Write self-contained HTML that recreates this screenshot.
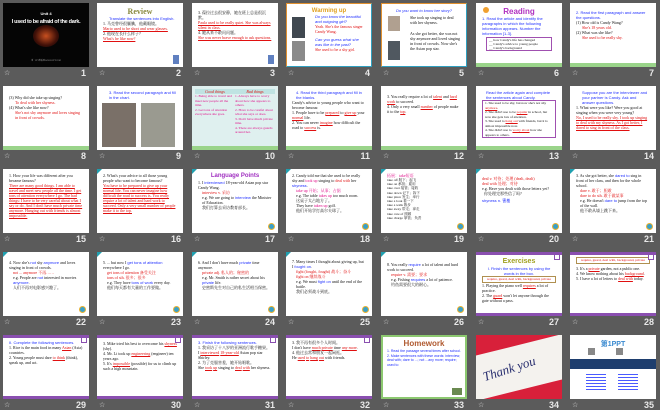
<!DOCTYPE html>
<html><head><meta charset="utf-8"><style>
*{margin:0;padding:0;box-sizing:border-box}
body{width:660px;height:410px;background:#5b5b5b;position:relative;overflow:hidden;font-family:"Liberation Serif","Noto Serif CJK SC",serif}
.s{position:absolute;width:86px;height:64px;background:#fff;overflow:hidden;font-size:4px;line-height:5px;padding:4px 6px;color:#111}
.st{position:absolute;color:#ddd;font-size:7px;font-family:"Liberation Sans","DejaVu Sans",sans-serif}
.n{position:absolute;width:40px;text-align:right;color:#e8e8e8;font-size:9px;font-weight:bold;font-family:"Liberation Sans",sans-serif}
.b{color:#1f2fff;font-family:"Liberation Sans","Noto Sans CJK SC",sans-serif}
.r{color:#e01010;text-decoration:underline}
.p{color:#e0108a}
.g{position:absolute;left:0;right:0;bottom:0;height:4px;background:#9ad48a}
.pu{position:absolute;left:0;right:0;top:0;height:3px;background:#8a4fb0}
.pub{position:absolute;left:0;right:0;bottom:0;height:3px;background:#8a4fb0}
.ic{position:absolute;right:3px;bottom:3px;width:7px;height:7px;border-radius:50%;background:#3aa0c8;border:1px solid #e8b030}
.tri{position:absolute;left:0;top:0;width:0;height:0;border-top:5px solid #20a0b0;border-right:5px solid transparent}
.ttl{font-family:"Liberation Sans",sans-serif;font-weight:bold;text-align:center;font-size:8px;line-height:9px}
.ph{position:absolute;background:#666}
</style></head><body>

<!-- Row 1 -->
<div class="s" style="left:3px;top:3px;background:#050505;color:#fff;padding:0">
 <div style="position:absolute;left:0;right:0;top:8px;text-align:center;font:bold 4px 'Liberation Sans',sans-serif">Unit 4</div>
 <div style="position:absolute;left:0;right:0;top:16px;text-align:center;font:bold 5.5px 'Liberation Sans',sans-serif;letter-spacing:-0.3px;white-space:nowrap">I used to be afraid of the dark.</div>
 <div style="position:absolute;left:30px;top:22px;width:26px;height:22px;border-radius:50%;background:radial-gradient(#c85020,#401008 60%,#050505)"></div>
 <div style="position:absolute;left:0;right:0;top:56px;text-align:center;font-size:2px;color:#aaa">第一PPT模板网-WWW.1PPT.COM</div>
</div>
<div class="s" style="left:97px;top:3px">
 <div class="ttl" style="color:#8a8a40;font-family:'Liberation Serif'">Review</div>
 <div class="b" style="padding-left:6px">Translate the sentences into English.</div>
 <div>1. 马克曾经很腼腆，他戴眼镜。</div><div class="r">Mario used to be short and wear glasses.</div>
 <div>2. 他现在长什么样子?</div><div class="r">What's he like now?</div>
 <div class="ph" style="right:4px;bottom:3px;width:6px;height:9px;background:#6080c0"></div>
</div>
<div class="s" style="left:192px;top:3px">
 <div style="margin-top:3px">3. 葆拉过去很安静，她在班上总是很沉默。</div><div class="r">Paula used to be really quiet. She was always silent in class.</div>
 <div>4. 她从来不敢问问题。</div><div class="r">She was never brave enough to ask questions.</div>
 <div class="ph" style="right:4px;bottom:3px;width:6px;height:9px;background:#6080c0"></div>
</div>
<div class="s" style="left:286px;top:3px;border:1.5px solid #e09030;border-right-color:#30a0c0;border-bottom-color:#30a0c0">
 <div class="ttl" style="color:#e0a020;font-size:6px;line-height:6px">Warming up</div>
 <div class="ph" style="left:5px;top:13px;width:13px;height:21px;background:#404850"></div>
 <div class="ph" style="left:5px;top:37px;width:13px;height:20px;background:#8a8a8a"></div>
 <div style="margin-left:22px;font-style:italic" class="b">Do you know the beautiful and outgoing girl?</div>
 <div style="margin-left:22px;color:#e01010">Yeah. She's the famous singer Candy Wang.</div>
 <div style="margin-left:22px;font-style:italic;margin-top:3px" class="b">Can you guess what she was like in the past?</div>
 <div style="margin-left:22px;color:#e01010">She used to be a shy girl.</div>
</div>
<div class="s" style="left:381px;top:3px;border:1.5px solid #e09030;border-right-color:#30a0c0;border-bottom-color:#30a0c0">
 <div class="b" style="font-style:italic;text-align:center">Do you want to know her story?</div>
 <div class="ph" style="left:6px;top:12px;width:12px;height:15px;background:#b0a090"></div>
 <div class="ph" style="left:6px;top:37px;width:12px;height:19px;background:#505860"></div>
 <div style="margin-left:22px;margin-top:2px">She took up singing to deal with her shyness.</div>
 <div style="margin-left:22px;margin-top:6px">As she got better, she was not shy anymore and loved singing in front of crowds. Now she's the Asian pop star.</div>
</div>
<div class="s" style="left:476px;top:3px">
 <div style="position:absolute;left:7px;top:4px;width:6px;height:6px;border-radius:50%;background:#f0a030"></div>
 <div class="ttl" style="color:#b030c0">Reading</div>
 <div class="b">1. Read the article and identify the paragraphs in which the following information appears. Number the information [1-3].</div>
 <div style="border:1px solid #a050b0;margin:1px 4px;padding:0 2px;font-size:3.5px;line-height:4px">__ how Candy's life has changed<br>__ Candy's advice to young people<br>__ Candy's background</div>
 <div class="g"></div>
</div>
<div class="s" style="left:570px;top:3px">
 <div class="b" style="margin-top:3px">2. Read the first paragraph and answer the questions.</div>
 <div>(1) How old is Candy Wang?</div><div style="color:#e01010;padding-left:6px">She's 18 years old.</div>
 <div>(2) What was she like?</div><div style="color:#e01010;padding-left:6px">She used to be really shy.</div>
 <div class="g"></div>
</div>

<!-- Row 2 -->
<div class="s" style="left:3px;top:86px">
 <div style="margin-top:5px">(3) Why did she take up singing?</div><div style="color:#e01010;padding-left:6px">To deal with her shyness.</div>
 <div>(4) What's she like now?</div><div style="color:#e01010;padding-left:6px">She's not shy anymore and loves singing in front of crowds.</div>
 <div class="g"></div>
</div>
<div class="s" style="left:97px;top:86px">
 <div class="b" style="padding-left:6px">3. Read the second paragraph and fill in the chart.</div>
 <div class="ph" style="left:5px;top:17px;width:34px;height:44px;background:#7a7068"></div>
 <div class="ph" style="left:44px;top:17px;width:34px;height:44px;background:#9a9a90"></div>
</div>
<div class="s" style="left:192px;top:86px;background:#dff0ef;padding:3px">
 <div style="display:flex;background:#bfe3e2;color:#e01010;font-style:italic"><div style="width:50%;text-align:center">Good things</div><div style="width:50%;text-align:center">Bad things</div></div>
 <div style="display:flex;color:#e0108a;font-size:3.5px;line-height:4.5px"><div style="width:50%">1. Being able to travel and meet new people all the time.<br>2. Get tons of attention everywhere she goes.</div><div style="width:50%" class="">1. Always have to worry about how she appears to others.<br>2. Have to be careful about what she says or does.<br>3. Don't have much private time.<br>4. There are always guards around her.</div></div>
 <div class="g"></div>
</div>
<div class="s" style="left:286px;top:86px">
 <div class="b" style="padding-left:4px">4. Read the third paragraph and fill in the blanks.</div>
 <div>Candy's advice to young people who want to become famous:</div>
 <div>1. People have to be <span class="r">prepared</span> to <span class="r">give up</span> your <span class="r">normal</span> life.</div>
 <div>2. You can never <span class="r">imagine</span> how difficult the road to <span class="r">success</span> is.</div>
 <div class="g"></div>
</div>
<div class="s" style="left:381px;top:86px">
 <div style="margin-top:4px">3. You really require a lot of <span class="r">talent</span> and <span class="r">hard work</span> to succeed.</div>
 <div>4. Only a very small <span class="r">number</span> of people make it to the <span class="r">top</span>.</div>
 <div class="g"></div>
</div>
<div class="s" style="left:476px;top:86px">
 <div class="b" style="padding-left:4px">Read the article again and complete the sentences about Candy.</div>
 <div style="border:1px solid #a050b0;padding:0 2px;font-size:3.5px;line-height:4.5px">1. She used to be shy, but now she's not shy <span class="r">anymore</span>.<br>2. She didn't use to be <span class="r">popular</span> in school, but now she gets lots of attention.<br>3. She used to <span class="r">hang out</span> with friends, but it is almost impossible now.<br>4. She didn't use to <span class="r">worry about</span> how she appears to others.</div>
 <div class="g"></div>
</div>
<div class="s" style="left:570px;top:86px">
 <div class="b" style="padding-left:6px">Suppose you are the interviewer and your partner is Candy. Ask and answer questions.</div>
 <div>1. What were you like? Were you good at singing when you were very young?</div>
 <div class="r">No, I used to be really shy. I took up singing to deal with my shyness. As I got better, I dared to sing in front of the class.</div>
</div>

<!-- Row 3 -->
<div class="s" style="left:3px;top:169px">
 <div>1. How your life was different after you became famous?</div>
 <div class="r">There are many good things. I am able to travel and meet new people all the time. I get tons of attention everywhere I go. The bad things: I have to be very careful about what I say or do. And I don't have much private time anymore. Hanging out with friends is almost impossible.</div>
</div>
<div class="s" style="left:97px;top:169px">
 <div class="tri"></div>
 <div>2. What's your advice to all those young people who want to become famous?</div>
 <div class="r">You have to be prepared to give up your normal life. You can never imagine how difficult the road to success is. You really require a lot of talent and hard work to succeed. Only a very small number of people make it to the top.</div>
</div>
<div class="s" style="left:192px;top:169px">
 <div class="tri"></div>
 <div class="ttl" style="color:#a030c0;font-size:6px;line-height:7px">Language Points</div>
 <div>1. I <span class="b">interviewed</span> 18-year-old Asian pop star Candy Wang.</div>
 <div style="color:#e01010;padding-left:4px">interview v. 采访</div>
 <div style="padding-left:4px">e.g. We are going to <span class="b">interview</span> the Minister of Education.<br>我们打算去采访教育部长。</div>
 <div class="ic"></div>
</div>
<div class="s" style="left:286px;top:169px">
 <div class="tri"></div>
 <div>2. Candy told me that she used to be really shy and <span class="p">took up</span> singing to <span style="color:#e01010">deal with</span> her <span class="b">shyness</span>.</div>
 <div class="p" style="padding-left:4px">take up 开始；从事；占据</div>
 <div style="padding-left:4px">e.g. The table <span class="p">takes up</span> too much room.<br>这桌子太占地方了。<br>They have <span class="p">taken up</span> golf.<br>他们开始学打高尔夫球了。</div>
 <div class="ic"></div>
</div>
<div class="s" style="left:381px;top:169px">
 <div class="tri"></div>
 <div class="p">拓展：take短语</div>
 <div style="font-size:3.5px;line-height:4.2px">take off 脱下；起飞<br>take on 承担；雇用<br>take over 接管；接收<br>take down 记下；拆下<br>take place 发生；举行<br>take a look 看一下<br>take a walk 散步<br>take away 带走；拿走<br>take care of 照顾<br>take charge 掌管；负责</div>
 <div class="ic"></div>
</div>
<div class="s" style="left:476px;top:169px">
 <div class="tri"></div>
 <div style="color:#e01010;margin-top:3px">deal v. 对待；处理 (dealt, dealt)</div>
 <div style="color:#e01010">deal with 处理；对待</div>
 <div>e.g. Have you dealt with those letters yet?<br>&nbsp;&nbsp;你处理完那些信了吗?</div>
 <div class="b" style="margin-top:2px">shyness n. 害羞</div>
 <div class="ic"></div>
</div>
<div class="s" style="left:570px;top:169px">
 <div class="tri"></div>
 <div>3. As she got better, she <span class="b">dared to</span> sing in front of her class, and then for the whole school.</div>
 <div style="color:#e01010;padding-left:4px">dare v. 敢于；胆敢<br>dare to do sth. 敢于做某事</div>
 <div style="padding-left:4px">e.g. He doesn't <span class="b">dare to</span> jump from the top of the wall.<br>他不敢从墙上跳下来。</div>
 <div class="ic"></div>
</div>

<!-- Row 4 -->
<div class="s" style="left:3px;top:252px">
 <div class="tri"></div>
 <div style="margin-top:4px">4. Now she's <span class="b">not</span> shy <span class="b">anymore</span> and loves singing in front of crowds.</div>
 <div style="color:#e01010;padding-left:4px">not ... anymore 不再……</div>
 <div style="padding-left:4px">e.g. People are <span class="b">not</span> interested in movies <span class="b">anymore</span>.<br>人们不再对电影感兴趣了。</div>
 <div class="ic"></div>
</div>
<div class="s" style="left:97px;top:252px">
 <div class="tri"></div>
 <div style="margin-top:4px">5. ... but now I <span class="b">get tons of attention</span> everywhere I go.</div>
 <div style="color:#e01010;padding-left:4px">get tons of attention 备受关注<br>tons of sth. 很多；很多</div>
 <div style="padding-left:4px">e.g. They have <span class="b">tons of work</span> every day.<br>他们每天都有大量的工作要做。</div>
 <div class="ic"></div>
</div>
<div class="s" style="left:192px;top:252px">
 <div class="tri"></div>
 <div style="margin-top:4px">6. And I don't have much <span class="b">private</span> time anymore.</div>
 <div style="color:#e01010;padding-left:4px">private adj. 私人的；秘密的</div>
 <div style="padding-left:4px">e.g. Mr. Smith is rather secret about his <span class="b">private</span> life.<br>史密斯先生对自己的私生活相当保密。</div>
 <div class="ic"></div>
</div>
<div class="s" style="left:286px;top:252px">
 <div class="tri"></div>
 <div style="margin-top:3px">7. Many times I thought about giving up, but I <span class="b">fought on</span>.</div>
 <div style="color:#e01010;padding-left:4px">fight (fought, fought) 战斗；奋斗<br>fight on 继续战斗</div>
 <div style="padding-left:4px">e.g. We must <span class="b">fight on</span> until the end of the battle.<br>我们必须战斗到底。</div>
 <div class="ic"></div>
</div>
<div class="s" style="left:381px;top:252px">
 <div class="tri"></div>
 <div style="margin-top:6px">8. You really <span class="b">require</span> a lot of talent and hard work to succeed.</div>
 <div style="color:#e01010;padding-left:4px">require v. 需要；要求</div>
 <div style="padding-left:4px">e.g. Fishing <span class="b">requires</span> a lot of patience.<br>钓鱼需要很大的耐心。</div>
 <div class="ic"></div>
</div>
<div class="s" style="left:476px;top:252px;padding-top:5px">
 <div class="pu"></div>
 <div style="position:absolute;right:2px;top:2px;width:6px;height:6px;background:#fff;border:1px solid #8a4fb0"></div>
 <div class="ttl" style="color:#a0a020;font-size:7px">Exercises</div>
 <div class="b" style="text-align:center">I. Finish the sentences by using the words in the box.</div>
 <div style="border:1px solid #b09050;color:#e01010;font-size:3.5px;text-align:center">require, guard, deal with, background, private</div>
 <div>1. Playing the piano well <span class="r">requires</span> a lot of practice.</div>
 <div>2. The <span class="r">guard</span> won't let anyone through the gate without a pass.</div>
 <div class="pub"></div>
</div>
<div class="s" style="left:570px;top:252px;padding-top:5px">
 <div class="pu"></div>
 <div style="position:absolute;right:2px;top:2px;width:6px;height:6px;background:#fff;border:1px solid #8a4fb0"></div>
 <div style="border:1px solid #b09050;color:#e01010;font-size:3.5px;text-align:center">require, guard, deal with, background, private</div>
 <div style="margin-top:2px">3. It's a <span class="r">private</span> garden, not a public one.</div>
 <div>4. We know nothing about his <span class="r">background</span>.</div>
 <div>5. I have a lot of letters to <span class="r">deal with</span> today.</div>
 <div class="pub"></div>
</div>

<!-- Row 5 -->
<div class="s" style="left:3px;top:335px;padding-top:5px">
 <div class="pu"></div>
 <div style="position:absolute;right:2px;top:2px;width:6px;height:6px;background:#fff;border:1px solid #8a4fb0"></div>
 <div class="b">II. Complete the following sentences.</div>
 <div>1. Rice is the main food in many <span class="r">Asian</span> (Asia) countries.</div>
 <div>2. Young people must dare <span class="r">to think</span> (think), speak up, and act.</div>
 <div class="pub"></div>
</div>
<div class="s" style="left:97px;top:335px;padding-top:6px">
 <div class="pu"></div>
 <div style="position:absolute;right:2px;top:2px;width:6px;height:6px;background:#fff;border:1px solid #8a4fb0"></div>
 <div>3. Mike tried his best to overcome his <span class="r">shyness</span> (shy).</div>
 <div>4. Mr. Li took up <span class="r">engineering</span> (engineer) ten years ago.</div>
 <div>5. It's <span class="r">impossible</span> (possible) for us to climb up such a high mountain.</div>
 <div class="pub"></div>
</div>
<div class="s" style="left:192px;top:335px;padding-top:5px">
 <div class="pu"></div>
 <div style="position:absolute;right:2px;top:2px;width:6px;height:6px;background:#fff;border:1px solid #8a4fb0"></div>
 <div class="b">3. Finish the following sentences.</div>
 <div>1. 我采访了十八岁的亚洲流行歌手糖果。</div>
 <div>I <span class="r">interviewed</span> <span class="r">18-year-old</span> Asian pop star Shirley.</div>
 <div>2. 为了克服害羞，她开始唱歌。</div>
 <div>She <span class="r">took</span> <span class="r">up</span> singing to <span class="r">deal</span> <span class="r">with</span> her shyness.</div>
 <div class="pub"></div>
</div>
<div class="s" style="left:286px;top:335px;padding-top:5px">
 <div class="pu"></div>
 <div style="position:absolute;right:2px;top:2px;width:6px;height:6px;background:#fff;border:1px solid #8a4fb0"></div>
 <div>3. 我不再有很多个人时间。</div>
 <div>I don't have <span class="r">much</span> <span class="r">private</span> time <span class="r">any more</span>.</div>
 <div>4. 他过去常和朋友一起闲逛。</div>
 <div>He <span class="r">used</span> <span class="r">to</span> <span class="r">hang</span> <span class="r">out</span> with friends.</div>
 <div class="pub"></div>
</div>
<div class="s" style="left:381px;top:335px;border:2.5px solid #8cc870;padding:2px 4px">
 <div class="ttl" style="color:#b05a30;font-size:8px;line-height:10px">Homework</div>
 <div class="b" style="font-size:3.5px;line-height:4.5px">1. Read the passage several times after school.<br>2. Make sentences with these words: interview; deal with; dare to ...; not ...any more; require; used to</div>
 <div class="ph" style="right:3px;bottom:2px;width:10px;height:7px;background:#6a8a50"></div>
</div>
<div class="s" style="left:476px;top:335px;background:#d8203a;padding:0">
 <div style="position:absolute;left:-10px;top:10px;width:110px;height:44px;background:#f4f2ee;transform:rotate(-14deg)"></div>
 <div style="position:absolute;left:6px;top:26px;font:italic 13px 'Liberation Serif',serif;color:#2a3070;transform:rotate(-18deg)">Thank you</div>
</div>
<div class="s" style="left:570px;top:335px;padding:0">
 <div style="position:absolute;left:0;right:0;top:4px;text-align:center;font:bold 7px 'Liberation Sans','Noto Sans CJK SC',sans-serif;color:#3a8ad0">第1PPT</div>
 <div class="ph" style="left:18px;top:13px;width:7px;height:7px;background:#888"></div>
 <div class="ph" style="left:46px;top:13px;width:7px;height:7px;background:#888"></div>
 <div style="position:absolute;left:0;right:0;top:24px;height:10px;background:#1e3e6e"></div>
 <div style="position:absolute;left:16px;top:39px;width:20px;height:16px;background:repeating-linear-gradient(#4a5aff 0 1px,#fff 1px 3px)"></div>
 <div style="position:absolute;left:48px;top:39px;width:20px;height:16px;background:repeating-linear-gradient(#4a5aff 0 1px,#fff 1px 3px)"></div>
</div>

<!-- labels -->
<div class="st" style="left:4px;top:69px">☆</div><div class="n" style="left:46px;top:68px">1</div>
<div class="st" style="left:99px;top:69px">☆</div><div class="n" style="left:141px;top:68px">2</div>
<div class="st" style="left:194px;top:69px">☆</div><div class="n" style="left:235px;top:68px">3</div>
<div class="st" style="left:288px;top:69px">☆</div><div class="n" style="left:330px;top:68px">4</div>
<div class="st" style="left:383px;top:69px">☆</div><div class="n" style="left:424px;top:68px">5</div>
<div class="st" style="left:478px;top:69px">☆</div><div class="n" style="left:519px;top:68px">6</div>
<div class="st" style="left:572px;top:69px">☆</div><div class="n" style="left:614px;top:68px">7</div>

<div class="st" style="left:4px;top:152px">☆</div><div class="n" style="left:46px;top:151px">8</div>
<div class="st" style="left:99px;top:152px">☆</div><div class="n" style="left:141px;top:151px">9</div>
<div class="st" style="left:194px;top:152px">☆</div><div class="n" style="left:235px;top:151px">10</div>
<div class="st" style="left:288px;top:152px">☆</div><div class="n" style="left:330px;top:151px">11</div>
<div class="st" style="left:383px;top:152px">☆</div><div class="n" style="left:424px;top:151px">12</div>
<div class="st" style="left:478px;top:152px">☆</div><div class="n" style="left:519px;top:151px">13</div>
<div class="st" style="left:572px;top:152px">☆</div><div class="n" style="left:614px;top:151px">14</div>

<div class="st" style="left:4px;top:235px">☆</div><div class="n" style="left:46px;top:234px">15</div>
<div class="st" style="left:99px;top:235px">☆</div><div class="n" style="left:141px;top:234px">16</div>
<div class="st" style="left:194px;top:235px">☆</div><div class="n" style="left:235px;top:234px">17</div>
<div class="st" style="left:288px;top:235px">☆</div><div class="n" style="left:330px;top:234px">18</div>
<div class="st" style="left:383px;top:235px">☆</div><div class="n" style="left:424px;top:234px">19</div>
<div class="st" style="left:478px;top:235px">☆</div><div class="n" style="left:519px;top:234px">20</div>
<div class="st" style="left:572px;top:235px">☆</div><div class="n" style="left:614px;top:234px">21</div>

<div class="st" style="left:4px;top:318px">☆</div><div class="n" style="left:46px;top:317px">22</div>
<div class="st" style="left:99px;top:318px">☆</div><div class="n" style="left:141px;top:317px">23</div>
<div class="st" style="left:194px;top:318px">☆</div><div class="n" style="left:235px;top:317px">24</div>
<div class="st" style="left:288px;top:318px">☆</div><div class="n" style="left:330px;top:317px">25</div>
<div class="st" style="left:383px;top:318px">☆</div><div class="n" style="left:424px;top:317px">26</div>
<div class="st" style="left:478px;top:318px">☆</div><div class="n" style="left:519px;top:317px">27</div>
<div class="st" style="left:572px;top:318px">☆</div><div class="n" style="left:614px;top:317px">28</div>

<div class="st" style="left:4px;top:401px">☆</div><div class="n" style="left:46px;top:400px">29</div>
<div class="st" style="left:99px;top:401px">☆</div><div class="n" style="left:141px;top:400px">30</div>
<div class="st" style="left:194px;top:401px">☆</div><div class="n" style="left:235px;top:400px">31</div>
<div class="st" style="left:288px;top:401px">☆</div><div class="n" style="left:330px;top:400px">32</div>
<div class="st" style="left:383px;top:401px">☆</div><div class="n" style="left:424px;top:400px">33</div>
<div class="st" style="left:478px;top:401px">☆</div><div class="n" style="left:519px;top:400px">34</div>
<div class="st" style="left:572px;top:401px">☆</div><div class="n" style="left:614px;top:400px">35</div>
</body></html>
